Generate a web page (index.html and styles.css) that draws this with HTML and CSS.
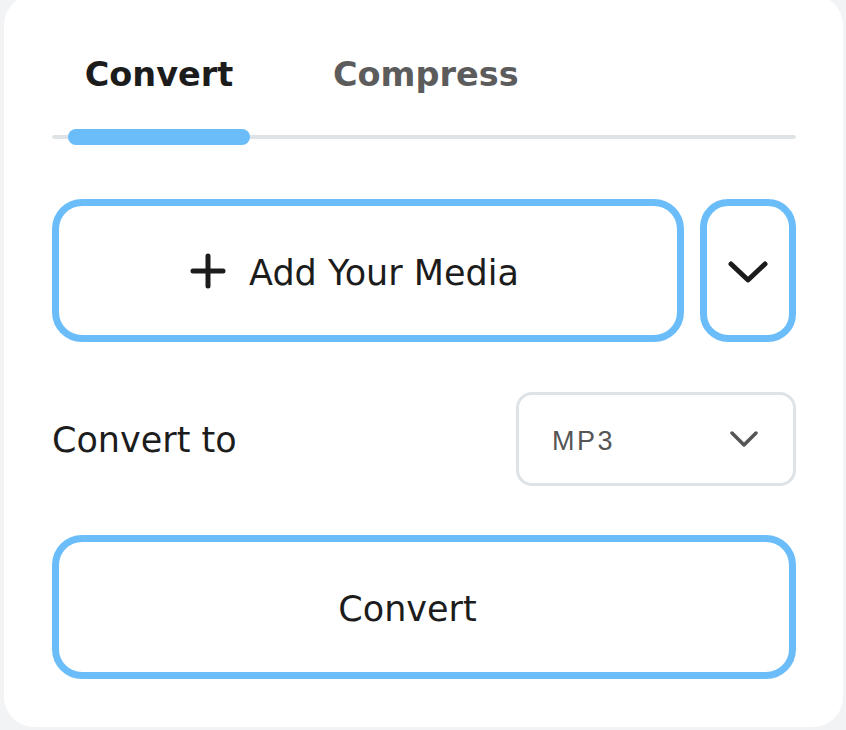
FILE: index.html
```html
<!DOCTYPE html>
<html>
<head>
<meta charset="utf-8">
<link rel="stylesheet" href="styles.css">
</head>
<body>
<div class="card">
  <div class="tabs">
    <div class="tab active">Convert</div>
    <div class="tab">Compress</div>
  </div>
  <div class="track"><div class="indicator"></div></div>
  <div class="media-row">
    <button class="add-btn">
      <svg class="plus" width="36" height="36" viewBox="0 0 36 36"><path d="M18 3v30M3 18h30" stroke="#1c1c1c" stroke-width="5" stroke-linecap="round" fill="none"/></svg>
      <span class="btn-text">Add Your Media</span>
    </button>
    <button class="more-btn">
      <svg width="40" height="22" viewBox="0 0 40 22"><path d="M3 3l17 16L37 3" stroke="#1c1c1c" stroke-width="5" stroke-linecap="round" stroke-linejoin="round" fill="none"/></svg>
    </button>
  </div>
  <div class="to-row">
    <span class="to-label">Convert to</span>
    <div class="select">
      <span class="select-value">MP3</span>
      <svg width="28" height="16" viewBox="0 0 28 16"><path d="M2 2l12 12L26 2" stroke="#555" stroke-width="3.5" stroke-linecap="round" stroke-linejoin="round" fill="none"/></svg>
    </div>
  </div>
  <button class="convert-btn"><span class="btn-text">Convert</span></button>
</div>
</body>
</html>
```
FILE: styles.css
```css
* { box-sizing: border-box; }
html, body { margin: 0; padding: 0; }
body {
  background: #f2f3f5;
  font-family: "DejaVu Sans", "Inter", sans-serif;
  color: #1c1c1c;
  height: 730px;
  overflow: hidden;
}
.card {
  margin: -5px 3px 0 4px;
  height: 732px;
  background: #fff;
  border-radius: 30px;
  padding: 0 47px 0 48px;
  display: flex;
  flex-direction: column;
}
.tabs {
  display: flex;
  gap: 83px;
  padding-left: 16px;
  margin-top: 58px;
  height: 44px;
}
.tab {
  width: 182px;
  text-align: center;
  white-space: nowrap;
  font-size: 33.5px;
  font-weight: 700;
  color: #5c5c5c;
  line-height: 44px;
}
.tab.active { color: #1c1c1c; }
.track {
  margin-top: 38px;
  height: 4px;
  border-radius: 2px;
  background: #dde3e7;
  position: relative;
}
.indicator {
  position: absolute;
  left: 16px;
  top: -6px;
  width: 182px;
  height: 16px;
  border-radius: 8px;
  background: #6bbdf9;
}
.media-row {
  display: flex;
  gap: 16px;
  margin-top: 60px;
  height: 143px;
}
button {
  font-family: inherit;
  background: #fff;
  border: 7px solid #6bbdf9;
  cursor: pointer;
  color: #1c1c1c;
  padding: 0;
}
.btn-text {
  font-size: 35px;
  line-height: 1.164;
}
.add-btn {
  flex: 1;
  border-radius: 30px;
  display: flex;
  align-items: center;
  justify-content: center;
  gap: 23px;
  padding-right: 27px;
}
.add-btn .btn-text { padding-top: 5px; }
.more-btn {
  width: 96px;
  border-radius: 28px;
  display: flex;
  align-items: center;
  justify-content: center;
  padding-top: 3px;
}
.to-row {
  display: flex;
  align-items: center;
  justify-content: space-between;
  margin-top: 50px;
  height: 94px;
}
.to-label {
  font-size: 35px;
  line-height: 1.164;
  padding-top: 3px;
}
.select {
  width: 280px;
  height: 94px;
  border: 3px solid #dde3e7;
  border-radius: 16px;
  display: flex;
  align-items: center;
  justify-content: space-between;
  padding: 0 35px 0 33px;
}
.select-value {
  font-family: "Liberation Sans", "Arial", sans-serif;
  font-size: 27px;
  letter-spacing: 2.5px;
  color: #555;
  padding-top: 4px;
}
.convert-btn {
  margin-top: 49px;
  height: 144px;
  border-radius: 30px;
  padding-right: 33px;
}
.convert-btn .btn-text { display: inline-block; padding-top: 4px; }
```
